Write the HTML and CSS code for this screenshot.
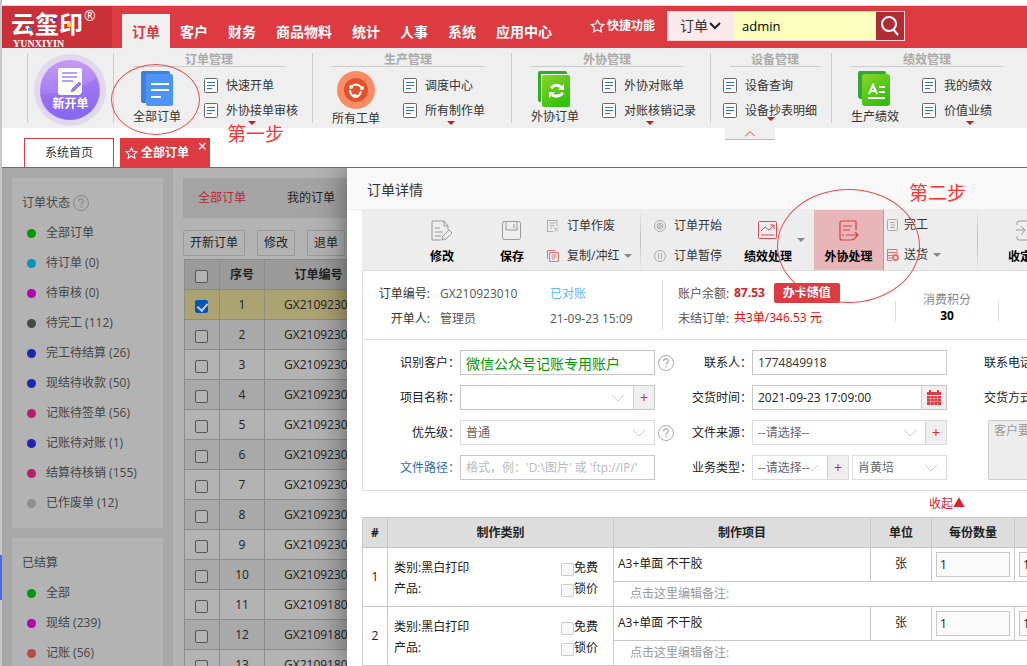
FILE: index.html
```html
<!DOCTYPE html>
<html lang="zh-CN">

<head>
    <meta charset="UTF-8">
    <meta name="viewport" content="width=device-width, initial-scale=1.0">
    <title>云玺印</title>
    <link rel="stylesheet" href="styles.css">
</head>

<body>
    <!-- shared icons -->
    <svg class="sprite" aria-hidden="true">
        <symbol id="doc" viewBox="0 0 14 15">
            <rect x="0.5" y="0.5" width="13" height="14" rx="1" fill="#fff" stroke="#666" />
            <path d="M3 4.5h8M3 7.5h8M3 10.5h5" stroke="#2b6cff" fill="none" />
        </symbol>
        <symbol id="star" viewBox="0 0 16 16">
            <path d="M8 1.5l2 4.4 4.700.5-3.500 3.200 1 4.700L8 11.900l-4.200 2.400 1-4.700L1.300 6.400l4.700-.5z" fill="none" stroke="#fff" stroke-width="1.300" />
        </symbol>
        <symbol id="help" viewBox="0 0 16 16">
            <circle cx="8" cy="8" r="7.500" fill="none" stroke="currentColor" />
            <path d="M5.600 6.300c0-3.200 4.800-3.200 4.800-.3C10.400 7.800 8 7.800 8 9.800M8 11v1.500" fill="none" stroke="currentColor" stroke-width="1.200" />
        </symbol>
        <symbol id="down" viewBox="0 0 14 8">
            <path d="M1 1l6 6 6-6" fill="none" stroke="#ccc" />
        </symbol>
    </svg>

    <div class="edge"><i></i></div>
    <div class="app">
        <header>
            <a class="logo" href="#">
                <b>云玺印</b><sup>®</sup>
                <small>YUNXIYIN</small>
                <svg viewBox="0 0 110 42" width="110" height="42">
                    <rect x="26" y="22" width="4" height="3" fill="#1e9be0" />
                    <rect x="51" y="12" width="4" height="3" fill="#7a2a8c" />
                    <rect x="65" y="17" width="4" height="4" fill="#ffd200" />
                </svg>
            </a>
            <nav>
                <a class="active" href="#">订单</a>
                <a href="#">客户</a>
                <a href="#">财务</a>
                <a href="#">商品物料</a>
                <a href="#">统计</a>
                <a href="#">人事</a>
                <a href="#">系统</a>
                <a href="#">应用中心</a>
            </nav>
            <a class="quick" href="#"><svg width="15" height="16"><use href="#star" /></svg>快捷功能</a>
            <form class="search">
                <label class="kind">
                    <select aria-label="类型">
                        <option>订单</option>
                    </select>
                    <svg width="12" height="8" viewBox="0 0 12 8"><path d="M1 1l5 5 5-5" fill="none" stroke="#222" stroke-width="2" /></svg>
                </label>
                <input type="text" value="admin" aria-label="搜索">
                <button type="button" aria-label="搜索">
                    <svg width="20" height="22" viewBox="0 0 20 22"><circle cx="9" cy="9" r="7" fill="none" stroke="#fff" stroke-width="2" /><path d="M13 14l5 6" stroke="#fff" stroke-width="2" /></svg>
                </button>
            </form>
        </header>

        <section class="ribbon">
            <a class="new" href="#">
                <svg width="72" height="72" viewBox="0 0 72 72">
                    <defs>
                        <linearGradient id="purple" x1="0" y1="0" x2="0" y2="1">
                            <stop offset="0" stop-color="#c79af8" />
                            <stop offset="1" stop-color="#8868f0" />
                        </linearGradient>
                    </defs>
                    <circle cx="36" cy="36" r="36" fill="#e2d8ee" />
                    <circle cx="36" cy="36" r="30" fill="url(#purple)" />
                    <path d="M6 40q36 0 56-16q8 18-4 32q-14 12-34 8q-16-6-18-24z" fill="#8462ee" opacity="0.4" />
                    <path d="M26 14h20q2 0 2 2v22l-2 3H26q-2 0-2-2V16q0-2 2-2z" fill="#fff" />
                    <path d="M28 19h15M28 23h15M28 27h11" stroke="#a080f2" stroke-width="1.500" />
                    <path d="M36 39l1-4 8-8 3 3-8 8z" fill="#9a78f2" stroke="#fff" />
                </svg>
                <span>新开单</span>
            </a>
            <div class="group">
                <h3>订单管理</h3>
                <div class="items">
                    <a class="big" href="#">
                        <svg width="36" height="36" viewBox="0 0 36 36"><path d="M4 0h25q2 0 2 2v2H8v28H4q-2 0-2-2V2q0-2 2-2z" fill="#3f7fe0" /><rect x="7" y="3" width="27" height="32" rx="2" fill="#4d95f5" /><path d="M12 13h18M12 19h18M12 26h10" stroke="#fff" stroke-width="2" /></svg>
                        全部订单
                    </a>
                    <div class="list">
                        <a href="#"><svg width="14" height="15"><use href="#doc" /></svg>快速开单</a>
                        <a href="#"><svg width="14" height="15"><use href="#doc" /></svg>外协接单审核</a>
                    </div>
                </div>
            </div>
            <div class="group">
                <h3>生产管理</h3>
                <div class="items">
                    <a class="big" href="#">
                        <svg width="38" height="38" viewBox="0 0 38 38"><circle cx="19" cy="19" r="19" fill="#f98c64" /><circle cx="19" cy="19" r="12" fill="#e2502c" /><path d="M14 16q5-5 10 0M24 20q-1 5-5 6M13 19q0 4 4 7" fill="none" stroke="#fff" stroke-width="2" /><circle cx="14" cy="16" r="2" fill="#fff" /><circle cx="25" cy="17" r="2" fill="#fff" /><circle cx="18" cy="25" r="2" fill="#fff" /></svg>
                        所有工单
                    </a>
                    <div class="list">
                        <a href="#"><svg width="14" height="15"><use href="#doc" /></svg>调度中心</a>
                        <a href="#"><svg width="14" height="15"><use href="#doc" /></svg>所有制作单</a>
                    </div>
                </div>
            </div>
            <div class="group">
                <h3>外协管理</h3>
                <div class="items">
                    <a class="big" href="#">
                        <svg width="36" height="36" viewBox="0 0 36 36"><defs><linearGradient id="green" x1="0" y1="0" x2="0.600" y2="1"><stop offset="0" stop-color="#8ad52a" /><stop offset="1" stop-color="#33c00c" /></linearGradient></defs><path d="M3 0h25q2 0 2 2v1H4v28H3q-2 0-2-2V2q0-2 2-2z" fill="#2fae28" /><rect x="5" y="4" width="28" height="32" rx="2" fill="url(#green)" /><path d="M14 17q5-5 10-1M26 22q-5 5-11 2" fill="none" stroke="#fff" stroke-width="3" /><path d="M21 19h6v-6zM18 21h-6v6z" fill="#fff" /></svg>
                        外协订单
                    </a>
                    <div class="list">
                        <a href="#"><svg width="14" height="15"><use href="#doc" /></svg>外协对账单</a>
                        <a href="#"><svg width="14" height="15"><use href="#doc" /></svg>对账核销记录</a>
                    </div>
                </div>
            </div>
            <div class="group narrow">
                <h3>设备管理</h3>
                <div class="items">
                    <div class="list">
                        <a href="#"><svg width="14" height="15"><use href="#doc" /></svg>设备查询</a>
                        <a href="#"><svg width="14" height="15"><use href="#doc" /></svg>设备抄表明细</a>
                    </div>
                </div>
            </div>
            <div class="group">
                <h3>绩效管理</h3>
                <div class="items">
                    <a class="big" href="#">
                        <svg width="36" height="36" viewBox="0 0 36 36"><path d="M2 0h25q2 0 2 2v2H6v24H3q-2-1-2-3V2z" fill="#2fa838" /><rect x="5" y="3" width="28" height="32" rx="3" fill="url(#green)" /><path d="M12 23l4-9 4 9M13 20h6M22 16h6M22 21h6M11 27h17" fill="none" stroke="#fff" stroke-width="2" /></svg>
                        生产绩效
                    </a>
                    <div class="list">
                        <a href="#"><svg width="14" height="15"><use href="#doc" /></svg>我的绩效</a>
                        <a href="#"><svg width="14" height="15"><use href="#doc" /></svg>价值业绩</a>
                    </div>
                </div>
            </div>
            <button class="collapse" type="button" aria-label="收起菜单">
                <svg width="10" height="6" viewBox="0 0 10 6"><path d="M0 5.500l5-5 5 5" fill="none" stroke="#dd3a42" /></svg>
            </button>
        </section>

        <div class="tabs">
            <a href="#">系统首页</a>
            <a class="current" href="#"><svg width="13" height="14"><use href="#star" /></svg>全部订单<i>×</i></a>
        </div>

        <div class="content">
            <aside>
                <div class="panel">
                    <h4>订单状态 <svg width="16" height="16"><use href="#help" /></svg></h4>
                    <ul>
                        <li class="green">全部订单</li>
                        <li class="cyan">待订单 (0)</li>
                        <li class="purple">待审核 (0)</li>
                        <li class="dark">待完工 (112)</li>
                        <li class="blue">完工待结算 (26)</li>
                        <li class="blue">现结待收款 (50)</li>
                        <li class="pink">记账待签单 (56)</li>
                        <li class="blue">记账待对账 (1)</li>
                        <li class="pink">结算待核销 (155)</li>
                        <li class="gray">已作废单 (12)</li>
                    </ul>
                </div>
                <div class="panel">
                    <h4>已结算</h4>
                    <ul>
                        <li class="green">全部</li>
                        <li class="purple">现结 (239)</li>
                        <li class="coral">记账 (56)</li>
                    </ul>
                </div>
            </aside>

            <main>
                <div class="filter">
                    <a class="on" href="#">全部订单</a>
                    <a href="#">我的订单</a>
                </div>
                <div class="actions">
                    <button type="button">开新订单</button>
                    <button type="button">修改</button>
                    <button type="button">退单</button>
                </div>
                <table class="orders">
                    <thead>
                        <tr>
                            <th><input type="checkbox" aria-label="全选"></th>
                            <th>序号</th>
                            <th>订单编号</th>
                            <th></th>
                        </tr>
                    </thead>
                    <tbody>
                        <tr class="selected"><td><input type="checkbox" aria-label="1" checked></td><td>1</td><td>GX210923010</td><td></td></tr>
                        <tr><td><input type="checkbox" aria-label="2"></td><td>2</td><td>GX210923009</td><td></td></tr>
                        <tr><td><input type="checkbox" aria-label="3"></td><td>3</td><td>GX210923008</td><td></td></tr>
                        <tr><td><input type="checkbox" aria-label="4"></td><td>4</td><td>GX210923007</td><td></td></tr>
                        <tr><td><input type="checkbox" aria-label="5"></td><td>5</td><td>GX210923006</td><td></td></tr>
                        <tr><td><input type="checkbox" aria-label="6"></td><td>6</td><td>GX210923005</td><td></td></tr>
                        <tr><td><input type="checkbox" aria-label="7"></td><td>7</td><td>GX210923004</td><td></td></tr>
                        <tr><td><input type="checkbox" aria-label="8"></td><td>8</td><td>GX210923003</td><td></td></tr>
                        <tr><td><input type="checkbox" aria-label="9"></td><td>9</td><td>GX210923002</td><td></td></tr>
                        <tr><td><input type="checkbox" aria-label="10"></td><td>10</td><td>GX210923001</td><td></td></tr>
                        <tr><td><input type="checkbox" aria-label="11"></td><td>11</td><td>GX210918003</td><td></td></tr>
                        <tr><td><input type="checkbox" aria-label="12"></td><td>12</td><td>GX210918002</td><td></td></tr>
                        <tr><td><input type="checkbox" aria-label="13"></td><td>13</td><td>GX210918001</td><td></td></tr>
                    </tbody>
                </table>
            </main>

            <!-- order detail drawer -->
            <section class="drawer">
                <h2>订单详情</h2>
                <div class="detail">
                    <div class="toolbar">
                        <button class="tool" type="button">
                            <svg width="22" height="22" viewBox="0 0 22 22" fill="none" stroke="#999"><path d="M17 10V6l-4-5H1v19h9M13 1v5h4M4 8h5M4 12h8M4 16h6" /><path d="M11 20l1-4 6-6 3 3-6 6z" /></svg>
                            修改
                        </button>
                        <button class="tool" type="button">
                            <svg width="22" height="22" viewBox="0 0 22 22" fill="none" stroke="#999"><rect x="1.500" y="1.500" width="18" height="18" rx="2" /><path d="M5 2v8h11V2M13 4v4" /></svg>
                            保存
                        </button>
                        <div class="stack">
                            <a href="#"><svg width="12" height="12" viewBox="0 0 12 12" fill="none" stroke="#aaa"><path d="M10 6V.500H.500v11H6M3 3h5M3 5.500h4M3 8h2M7 7.500l4 4M11 7.500l-4 4" /></svg>订单作废</a>
                            <a href="#"><svg width="12" height="12" viewBox="0 0 12 12" fill="none" stroke="#e0737a"><path d="M.500 9V.500h8M2.500 2.500h9v9h-9zM4.500 5h5M4.500 7h5M4.500 9h3" /></svg>复制/冲红<i class="caret"></i></a>
                        </div>
                        <div class="stack state">
                            <a href="#"><svg width="12" height="12" viewBox="0 0 12 12" fill="none" stroke="#aaa"><circle cx="6" cy="6" r="5.500" /><circle cx="6" cy="6" r="3" /><path d="M5 4l3 2-3 2z" /></svg>订单开始</a>
                            <a href="#"><svg width="12" height="12" viewBox="0 0 12 12" fill="none" stroke="#aaa"><circle cx="6" cy="6" r="5.500" /><path d="M4.500 3v6M7.500 3v6" /></svg>订单暂停</a>
                        </div>
                        <button class="tool perf" type="button">
                            <svg width="22" height="22" viewBox="0 0 22 22" fill="none" stroke="#dd4a52"><rect x="1.500" y="1.500" width="18" height="17" rx="1" /><path d="M4 11l4-4 4 3 5-5M13 5h4v4M4 15h13" /></svg>
                            绩效处理
                        </button>
                        <i class="caret"></i>
                        <button class="tool picked" type="button">
                            <svg width="22" height="22" viewBox="0 0 22 22" fill="none" stroke="#dd3a42" stroke-width="1.200"><path d="M18 10V2q0-1-1-1H4q-2 0-2 2v15q0 2 2 2h9q3 0 4-2M5 6h9M5 10h7M4 15h2M8 15h12M17 12l3 3-3 3" /></svg>
                            外协处理
                        </button>
                        <div class="stack done">
                            <a href="#"><svg width="12" height="12" viewBox="0 0 12 12" fill="none" stroke="#aaa"><rect x="0.500" y="0.500" width="10" height="11" rx="1" /><path d="M3 3.500h5M4 6h4M3 8.500h5" /></svg>完工</a>
                            <a href="#"><svg width="12" height="12" viewBox="0 0 12 12" fill="none" stroke="#e0737a"><path d="M10 5V.500H.500v11H5M.500 3.500h9M.500 6.500H6M.500 9H5" /><circle cx="8.500" cy="8.500" r="2.500" stroke-width="2" /></svg>送货<i class="caret"></i></a>
                        </div>
                        <button class="tool" type="button">
                            <svg width="22" height="22" viewBox="0 0 22 22" fill="none" stroke="#999"><path d="M2 5V3q0-2 2-2h14v19H4q-2 0-2-2v-2M1 10h8M6 6l4 4-4 5" /></svg>
                            收定金
                        </button>
                    </div>

                    <div class="info">
                        <dl class="base">
                            <dt>订单编号:</dt>
                            <dd>GX210923010</dd>
                            <dd class="checked">已对账</dd>
                            <dt>开单人:</dt>
                            <dd>管理员</dd>
                            <dd>21-09-23 15:09</dd>
                        </dl>
                        <dl class="money">
                            <dt>账户余额:</dt>
                            <dd><b>87.53</b> <button type="button">办卡储值</button></dd>
                            <dt>未结订单:</dt>
                            <dd class="owed">共3单/346.53 元</dd>
                        </dl>
                        <div class="points">消费积分<b>30</b></div>
                    </div>

                    <form class="fields">
                        <div class="field">
                            <label for="customer">识别客户：</label>
                            <input class="customer" type="text" id="customer" value="微信公众号记账专用账户">
                            <svg class="tip" width="16" height="16"><use href="#help" /></svg>
                        </div>
                        <div class="field">
                            <label for="contact">联系人：</label>
                            <input type="text" id="contact" value="1774849918">
                        </div>
                        <div class="field">
                            <label for="phone">联系电话：</label>
                            <input type="text" id="phone">
                        </div>
                        <div class="field">
                            <label for="project">项目名称：</label>
                            <div class="combo strong">
                                <select id="project">
                                    <option></option>
                                </select>
                                <svg width="14" height="8"><use href="#down" /></svg>
                                <button type="button">+</button>
                            </div>
                        </div>
                        <div class="field">
                            <label for="deliver">交货时间：</label>
                            <div class="combo strong">
                                <input type="text" id="deliver" value="2021-09-23 17:09:00">
                                <button class="cal" type="button" aria-label="日历">
                                    <svg width="14" height="15" viewBox="0 0 14 15"><path d="M0 2h14v3H0zM2 0h2v3H2zM10 0h2v3h-2zM0 6h14v9H0z" fill="#dd3a42" /><path d="M0 8.500h14M0 11.500h14M3.500 6v9M7 6v9M10.500 6v9" stroke="#f0a8ac" stroke-width="0.700" /></svg>
                                </button>
                            </div>
                        </div>
                        <div class="field">
                            <label for="way">交货方式：</label>
                            <input type="text" id="way">
                        </div>
                        <div class="field">
                            <label for="level">优先级：</label>
                            <div class="combo">
                                <select id="level">
                                    <option>普通</option>
                                </select>
                                <svg width="14" height="8"><use href="#down" /></svg>
                            </div>
                            <svg class="tip" width="16" height="16"><use href="#help" /></svg>
                        </div>
                        <div class="field">
                            <label for="source">文件来源：</label>
                            <div class="combo">
                                <select id="source">
                                    <option>--请选择--</option>
                                </select>
                                <svg width="14" height="8"><use href="#down" /></svg>
                                <button type="button">+</button>
                            </div>
                        </div>
                        <textarea aria-label="客户要求" placeholder="客户要求"></textarea>
                        <div class="field">
                            <label class="link" for="path">文件路径：</label>
                            <input type="text" id="path" placeholder="格式，例：'D:\图片' 或 'ftp://IP/'">
                        </div>
                        <div class="field">
                            <label for="type">业务类型：</label>
                            <div class="combo half">
                                <select id="type">
                                    <option>--请选择--</option>
                                </select>
                                <svg width="14" height="8"><use href="#down" /></svg>
                                <button type="button">+</button>
                            </div>
                            <div class="combo half">
                                <select aria-label="业务员">
                                    <option>肖黄培</option>
                                </select>
                                <svg width="14" height="8"><use href="#down" /></svg>
                            </div>
                        </div>
                    </form>

                    <a class="fold" href="#">收起▲</a>

                    <table class="jobs">
                        <colgroup>
                            <col class="c-no">
                            <col class="c-kind">
                            <col class="c-item">
                            <col class="c-unit">
                            <col class="c-qty">
                            <col>
                        </colgroup>
                        <thead>
                            <tr>
                                <th>#</th>
                                <th>制作类别</th>
                                <th>制作项目</th>
                                <th>单位</th>
                                <th>每份数量</th>
                                <th></th>
                            </tr>
                        </thead>
                        <tbody>
                            <tr class="main-row">
                                <td class="mid" rowspan="2">1</td>
                                <td rowspan="2">
                                    <div class="kinds">
                                        <p>类别:黑白打印<br>产品:</p>
                                        <p><label><input type="checkbox">免费</label><label><input type="checkbox">锁价</label></p>
                                    </div>
                                </td>
                                <td class="item">A3+单面 不干胶</td>
                                <td class="mid unit">张</td>
                                <td><input type="text" value="1" aria-label="每份数量"></td>
                                <td><input type="text" value="1" aria-label="份数"></td>
                            </tr>
                            <tr class="note-row">
                                <td colspan="4">点击这里编辑备注:</td>
                            </tr>
                            <tr class="main-row">
                                <td class="mid" rowspan="2">2</td>
                                <td rowspan="2">
                                    <div class="kinds">
                                        <p>类别:黑白打印<br>产品:</p>
                                        <p><label><input type="checkbox">免费</label><label><input type="checkbox">锁价</label></p>
                                    </div>
                                </td>
                                <td class="item">A3+单面 不干胶</td>
                                <td class="mid unit">张</td>
                                <td><input type="text" value="1" aria-label="每份数量"></td>
                                <td><input type="text" value="1" aria-label="份数"></td>
                            </tr>
                            <tr class="note-row">
                                <td colspan="4">点击这里编辑备注:</td>
                            </tr>
                        </tbody>
                    </table>
                </div>
            </section>
        </div>
    </div>

    <!-- step marks drawn over the page -->
    <div class="ring ring-one"></div>
    <div class="step step-one">第一步</div>
    <div class="ring ring-two"></div>
    <div class="step step-two">第二步</div>
</body>

</html>
```

FILE: styles.css
```css
* {
    margin: 0;
    padding: 0;
    box-sizing: border-box;
}

body {
    display: flex;
    position: relative;
    height: 100vh;
    overflow: hidden;
    font-family: "Open Sans", "Noto Sans CJK SC", sans-serif;
    font-size: 12px;
    line-height: 20px;
    color: #333;
    background-color: #fff;
}

a {
    color: inherit;
    text-decoration: none;
}

svg {
    display: block;
    flex-shrink: 0;
}

input,
select,
textarea,
button {
    font: inherit;
    color: inherit;
    border-radius: 0;
    outline: none;
}

select {
    appearance: none;
}

.sprite {
    position: absolute;
    width: 0;
    height: 0;
}

.edge {
    flex: 0 0 2px;
    background-color: #c8c8c8;
}

.edge i {
    display: block;
    height: 45px;
    margin-top: 555px;
    background-color: #4a68e8;
}

.app {
    flex: 1;
    min-width: 0;
    display: flex;
    flex-direction: column;
    padding-top: 5px;
}

/* header */
header {
    display: flex;
    flex-shrink: 0;
    height: 43px;
    border-top: 1px solid #ddd;
    background-color: #dd3a42;
    color: #fff;
}

.logo {
    position: relative;
    width: 110px;
    padding: 6px 0 0 9px;
    background-color: #c93037;
}

.logo b {
    font-size: 24px;
    line-height: 24px;
}

.logo sup {
    position: absolute;
    left: 82px;
    top: 0;
    font-size: 14px;
}

.logo small {
    display: block;
    padding-left: 2px;
    font-family: "Liberation Serif", serif;
    font-size: 10px;
    font-weight: bold;
    line-height: 9px;
}

.logo svg {
    position: absolute;
    left: 0;
    top: 0;
}

nav {
    display: flex;
    align-items: flex-end;
    margin-left: 10px;
}

nav a {
    padding: 2px 10px 0;
    font-size: 14px;
    font-weight: bold;
    line-height: 32px;
}

nav .active {
    color: #dd3a42;
    background-color: #efefef;
}

.quick {
    display: flex;
    align-items: center;
    gap: 2px;
    height: 40px;
    margin-left: 28px;
    font-weight: bold;
}

.search {
    display: flex;
    height: 30px;
    margin: 5px 0 0 12px;
    border: 1px solid #f3d4d6;
}

.kind {
    display: flex;
    align-items: center;
    width: 66px;
    padding-left: 12px;
    background-color: #fbeaeb;
}

.kind select {
    width: 29px;
    border: 0;
    background: none;
    font-size: 14px;
    color: #333;
}

.search input {
    width: 142px;
    padding-left: 8px;
    border: 0;
    background-color: #faffbd;
    font-size: 13px;
    color: #000;
}

.search button {
    display: flex;
    align-items: center;
    justify-content: center;
    width: 28px;
    border: 0;
    background-color: #b02c33;
}

/* ribbon */
.ribbon {
    position: relative;
    display: flex;
    flex-shrink: 0;
    height: 80px;
    padding: 5px 0 5px 25px;
    background-color: #efefef;
}

.new {
    position: relative;
    flex: 0 0 86px;
    padding: 1px 0 0 6px;
    border-left: 1px solid #ccc;
    color: #fff;
    font-weight: bold;
}

.new span {
    position: absolute;
    left: 0;
    top: 41px;
    width: 100%;
    text-align: center;
}

.group {
    width: 199px;
    flex-shrink: 0;
    border-left: 1px solid #ccc;
}

.group h3 {
    width: 152px;
    margin-left: 19px;
    border-bottom: 1px solid #ccc;
    font-size: 12px;
    line-height: 13px;
    text-align: center;
    color: #aaa;
}

.items {
    display: flex;
    gap: 23px;
    padding-left: 19px;
}

.big {
    display: flex;
    flex-direction: column;
    align-items: center;
    justify-content: space-between;
    width: 48px;
    height: 60px;
    padding-top: 4px;
    white-space: nowrap;
}

.list {
    position: relative;
    width: 96px;
    padding-top: 6px;
}

.list a {
    display: flex;
    align-items: center;
    gap: 8px;
    line-height: 25px;
    white-space: nowrap;
}

.list::after {
    content: "";
    position: absolute;
    left: 44px;
    bottom: 2px;
    border: 4px solid transparent;
    border-top-color: #d0141c;
    border-bottom: 0;
}

.narrow {
    width: 121px;
}

.narrow h3 {
    width: 90px;
}

.narrow .items {
    padding-left: 12px;
}

.collapse {
    position: absolute;
    left: 723px;
    top: 80px;
    display: flex;
    align-items: center;
    justify-content: center;
    width: 50px;
    height: 12px;
    border: 0;
    border-bottom: 1px solid #bbb;
    background-color: #efefef;
}

/* page tabs */
.tabs {
    display: flex;
    flex-shrink: 0;
    align-items: flex-end;
    gap: 6px;
    height: 40px;
    padding-left: 22px;
    border-bottom: 1px solid #dd3a42;
}

.tabs a {
    width: 90px;
    border: 1px solid #dd3a42;
    border-bottom: 0;
    line-height: 28px;
    text-align: center;
}

.tabs .current {
    position: relative;
    display: flex;
    align-items: center;
    gap: 3px;
    padding-left: 4px;
    background-color: #dd3a42;
    color: #fff;
    font-weight: bold;
}

.current i {
    position: absolute;
    right: 2px;
    top: 0;
    font-size: 16px;
    font-style: normal;
    font-weight: normal;
    line-height: 14px;
}

/* content behind the drawer */
.content {
    position: relative;
    flex: 1;
    min-height: 0;
    display: flex;
    overflow: hidden;
    background-color: #b3b3b3;
}

aside {
    flex: 0 0 171px;
    display: flex;
    flex-direction: column;
    gap: 10px;
    padding: 10px;
    background-color: #a8a8a8;
}

.panel {
    flex-shrink: 0;
    padding: 10px;
    background-color: #b3b3b3;
    color: #444;
}

.panel h4 {
    display: flex;
    align-items: center;
    gap: 3px;
    font-size: 12px;
    font-weight: normal;
    line-height: 30px;
}

.panel h4 svg {
    color: #888;
}

.panel li {
    display: flex;
    align-items: center;
    gap: 10px;
    padding-left: 5px;
    line-height: 30px;
}

.panel li::before {
    content: "";
    width: 9px;
    height: 9px;
    border-radius: 50%;
    background-color: currentColor;
}

.panel .green::before { background-color: #00990a; }
.panel .cyan::before { background-color: #0093bd; }
.panel .purple::before { background-color: #b300b3; }
.panel .dark::before { background-color: #484848; }
.panel .blue::before { background-color: #2222b3; }
.panel .pink::before { background-color: #b81e66; }
.panel .gray::before { background-color: #8f8f8f; }
.panel .coral::before { background-color: #b84a4a; }

main {
    flex: 1;
    min-width: 0;
    padding: 10px 0 0 10px;
    color: #222;
}

.filter {
    display: flex;
    gap: 41px;
    padding-left: 15px;
    line-height: 40px;
    background-color: #a4a4a4;
}

.filter .on {
    color: #b02a30;
}

.actions {
    display: flex;
    gap: 12px;
    padding: 12px 0 3px;
}

.actions button {
    height: 26px;
    padding: 0 6px;
    border: 1px solid #9a9a9a;
    border-radius: 2px;
    background-color: #b3b3b3;
}

.orders {
    width: 100%;
    margin-left: 1px;
    table-layout: fixed;
    border-collapse: collapse;
}

.orders tr {
    height: 30px;
}

.orders tr:nth-child(even) {
    background-color: #a9a9a9;
}

.orders thead tr {
    background-color: #9b9b9b;
}

.orders .selected {
    background-color: #aca373;
}

.orders th,
.orders td {
    border: 1px solid #8c8c8c;
    text-align: center;
}

.orders td:nth-child(3) {
    padding-left: 19px;
    text-align: left;
}

.orders th:nth-child(1) { width: 35px; }
.orders th:nth-child(2) { width: 45px; }
.orders th:nth-child(3) { width: 108px; }

.orders input {
    position: relative;
    display: block;
    width: 13px;
    height: 13px;
    margin: 3px auto 0 10px;
    appearance: none;
    border: 1px solid #555;
    border-radius: 2px;
    background-color: #b3b3b3;
}

.orders input:checked {
    border-color: #0056b8;
    background-color: #0056b8;
}

.orders input:checked::after {
    content: "";
    position: absolute;
    left: 3px;
    top: 0;
    width: 5px;
    height: 8px;
    border: solid #ccc;
    border-width: 0 2px 2px 0;
    transform: rotate(40deg);
}

/* drawer */
.drawer {
    position: absolute;
    left: 345px;
    right: 0;
    top: 0;
    bottom: 0;
    background-color: #fff;
    box-shadow: 0 0 30px rgba(0, 0, 0, 0.5);
    overflow: hidden;
}

.drawer h2 {
    padding: 2px 0 0 20px;
    border-bottom: 1px solid #eee;
    background-color: #f8f8f8;
    font-size: 14px;
    font-weight: normal;
    line-height: 39px;
}

.detail {
    min-width: 1170px;
    padding-left: 15px;
}

.toolbar {
    display: flex;
    height: 61px;
    padding-left: 45px;
    border-bottom: 1px solid #ddd;
    background-color: #ededed;
}

.tool {
    display: flex;
    flex-direction: column;
    align-items: center;
    justify-content: space-between;
    width: 70px;
    padding: 10px 0 3px;
    border: 0;
    background: none;
    font-weight: bold;
    color: #000;
}

.perf {
    width: 50px;
}

.picked {
    border-right: 1px solid #dd8a8e;
    background-color: #e8b6b8;
}

.caret {
    align-self: center;
    border: 4px solid transparent;
    border-top-color: #888;
    border-bottom: 0;
}

.toolbar > .caret {
    margin: 0 9px 0 4px;
}

.stack {
    display: flex;
    flex-direction: column;
    gap: 10px;
    width: 94px;
    padding-top: 6px;
    border-right: 1px solid #ccc;
    border-image: linear-gradient(#ededed, #bbb, #ededed) 1;
}

.stack a {
    display: flex;
    align-items: center;
    gap: 8px;
}

.stack .caret {
    margin-left: -3px;
}

.state {
    width: 102px;
    padding-left: 13px;
    border: 0;
}

.done {
    padding: 5px 0 0 3px;
    margin-right: 13px;
}

.done a {
    gap: 5px;
}

.done .caret {
    margin-left: 0;
}

.info {
    display: flex;
    align-items: center;
    height: 69px;
    border: 1px solid #ddd;
    border-top: 0;
}

.info dl {
    display: grid;
    grid-auto-rows: 25px;
    line-height: 27px;
    white-space: nowrap;
}

.base {
    grid-template-columns: 67px 100px 112px;
    column-gap: 10px;
    height: 50px;
    border-right: 1px solid #ddd;
}

.base dt {
    text-align: right;
}

.base dd {
    color: #555;
}

.base .checked {
    color: #5bbcf8;
}

.money {
    grid-template-columns: 51px 161px;
    column-gap: 5px;
    padding-left: 15px;
    color: #555;
}

.money dd {
    display: flex;
    align-items: center;
    gap: 9px;
}

.money b {
    color: #d9232c;
}

.money button {
    width: 66px;
    height: 20px;
    border: 0;
    border-radius: 2px;
    background-color: #dd3a42;
    color: #fff;
    font-weight: bold;
    line-height: 20px;
}

.money .owed {
    color: #f00;
}

.points {
    display: flex;
    flex-direction: column;
    align-items: center;
    justify-content: center;
    width: 104px;
    height: 20px;
    margin-top: 12px;
    padding-bottom: 6px;
    border: solid #ddd;
    border-width: 0 1px;
    line-height: 16px;
    color: #888;
}

.points b {
    color: #000;
}

.fields {
    display: grid;
    grid-template-columns: 292px 292px 1fr;
    grid-auto-rows: 25px;
    row-gap: 10px;
    padding: 10px 0;
    border: 1px solid #ddd;
    border-top: 0;
}

.field {
    display: flex;
    align-items: center;
}

.field > label {
    flex: 0 0 97px;
    text-align: right;
    color: #222;
}

.field .link {
    color: #2a6db5;
}

.field > input,
.combo {
    flex: 0 0 195px;
    height: 25px;
    padding-left: 5px;
    border: 1px solid #c8c8c8;
    background-color: #fff;
}

.field .customer {
    font-size: 14px;
    color: #090;
}

.fields ::placeholder {
    color: #bbb;
    opacity: 1;
}

.fields textarea::placeholder {
    color: #999;
}

.tip {
    margin-left: 3px;
    color: #aaa;
}

.combo {
    display: flex;
    align-items: center;
    border-color: #ddd;
    color: #666;
}

.combo.strong {
    border-color: #c8c8c8;
    color: #222;
}

.combo select,
.combo input {
    flex: 1;
    min-width: 0;
    border: 0;
    background: none;
}

.combo svg {
    margin: 0 8px 0 -14px;
}

.combo button {
    width: 21px;
    height: 23px;
    border: 0;
    border-left: 1px solid #ccc;
    background-color: #efefef;
    color: #d9232c;
    font-size: 14px;
    line-height: 20px;
}

.combo .cal {
    display: flex;
    align-items: center;
    justify-content: center;
    width: 25px;
}

.combo .cal svg {
    margin: 0;
}

.half {
    flex-basis: 97px;
}

.half + .half {
    flex-basis: 95px;
    margin-left: 3px;
}

.fields textarea {
    grid-column: 3;
    grid-row: 3 / span 2;
    margin: 0 10px 0 41px;
    padding: 0 5px;
    border: 1px solid #ccc;
    border-radius: 2px;
    background-color: #ededed;
    resize: none;
}

.fold {
    display: block;
    padding-left: 15px;
    line-height: 26px;
    text-align: center;
    color: #d9232c;
}

.jobs {
    width: 100%;
    table-layout: fixed;
    border-collapse: collapse;
    color: #222;
}

.c-no { width: 25px; }
.c-kind { width: 226px; }
.c-item { width: 257px; }
.c-unit { width: 61px; }
.c-qty { width: 83px; }

.jobs th,
.jobs td {
    border: 1px solid #c8c8c8;
}

.jobs th {
    height: 30px;
    background-color: #ddd;
}

.mid {
    text-align: center;
}

.item,
.unit {
    padding: 0 4px 2px;
}

.main-row {
    height: 34px;
}

.note-row {
    height: 25px;
}

.note-row td {
    padding-left: 16px;
    color: #999;
}

.kinds {
    display: flex;
    justify-content: space-between;
    padding: 1px 15px 0 6px;
    line-height: 21px;
}

.kinds label {
    display: flex;
    align-items: center;
}

.kinds input {
    width: 13px;
    height: 13px;
    margin-top: 4px;
    appearance: none;
    border: 1px solid #ccc;
    border-radius: 2px;
    background-color: #f8f8f8;
}

.jobs input[type="text"] {
    display: block;
    width: 74px;
    height: 25px;
    margin-left: 4px;
    padding-left: 3px;
    border: 1px solid #c8c8c8;
    background-color: #fafafa;
}

/* step marks */
.ring {
    position: absolute;
    border: 1px solid #f04a4a;
    border-radius: 50%;
    pointer-events: none;
}

.ring-one {
    left: 111px;
    top: 64px;
    width: 89px;
    height: 71px;
}

.ring-two {
    left: 777px;
    top: 189px;
    width: 143px;
    height: 114px;
}

.step {
    position: absolute;
    font-size: 19px;
    line-height: 24px;
    color: #ff3333;
}

.step-one {
    left: 227px;
    top: 122px;
}

.step-two {
    left: 909px;
    top: 181px;
}
```
